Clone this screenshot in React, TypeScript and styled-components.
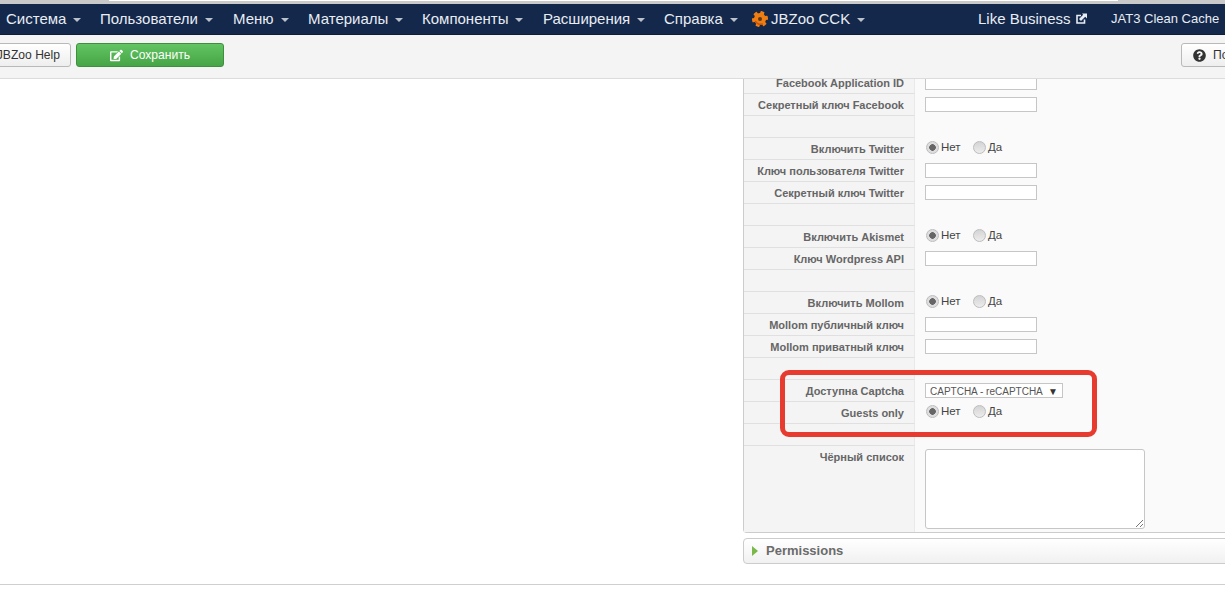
import React from 'react';
import styled, { createGlobalStyle } from 'styled-components';
import { FaEdit, FaQuestionCircle } from 'react-icons/fa';

const GlobalStyle = createGlobalStyle`
  html, body {
    margin: 0;
    padding: 0;
    height: 605px;
    overflow: hidden;
    background: #fff;
    font-family: "Liberation Sans", Arial, sans-serif;
  }
`;

const Page = styled.div`
  width: 1225px;
  height: 605px;
  overflow: hidden;
  display: flex;
  flex-direction: column;
`;

const TopStrip = styled.div`
  height: 4px;
  background: #c9c9c9;
  padding-left: 109px;
  padding-right: 107px;
  flex: none;
`;

const StripHighlight = styled.div`
  height: 1px;
  background: #fff;
`;

const Navbar = styled.nav`
  height: 31px;
  flex: none;
  background: #14284b;
  border-bottom: 1px solid #0f1e38;
  box-sizing: border-box;
  display: flex;
  align-items: center;
  padding: 0 0 1px 6px;
  color: #e8edf4;
  font-size: 15px;
  white-space: nowrap;
`;

const NavItem = styled.div<{ $w: number }>`
  width: ${p => p.$w}px;
  flex: none;
  display: flex;
  align-items: center;
`;

const CacheItem = styled(NavItem)`
  font-size: 13px;
`;

const Caret = styled.span`
  width: 0;
  height: 0;
  margin: 3px 0 0 7px;
  border-top: 4px solid #bcc2cc;
  border-left: 4px solid transparent;
  border-right: 4px solid transparent;
`;

const NavIcon = styled.svg`
  width: 16px;
  height: 16px;
  margin: 0 3px 0 1px;
  flex: none;
`;

const OutIcon = styled.svg`
  width: 11px;
  height: 11px;
  margin-left: 5px;
  flex: none;
`;

const Toolbar = styled.div`
  height: 44px;
  flex: none;
  box-sizing: border-box;
  background: #f4f4f4;
  border-bottom: 1px solid #dcdcdc;
  display: flex;
  align-items: flex-start;
  padding-top: 8px;
  overflow: hidden;
`;

const ToolButton = styled.div<{ $w: number; $ml: number }>`
  flex: none;
  width: ${p => p.$w}px;
  margin-left: ${p => p.$ml}px;
  height: 24px;
  box-sizing: border-box;
  border-radius: 3px;
  border: 1px solid #b9b9b9;
  background: linear-gradient(#ffffff, #eeeeee);
  color: #333;
  font-size: 12.1px;
  display: flex;
  align-items: center;
  gap: 7px;
  white-space: nowrap;
`;

const HelpButton = styled(ToolButton)`
  justify-content: flex-end;
  padding-right: 10px;
`;

const SaveButton = styled(ToolButton)`
  justify-content: center;
  border-color: #3f8f3f;
  background: linear-gradient(#62c462, #46a546);
  color: #fff;
`;

const OptionsButton = styled(ToolButton)`
  padding-left: 11px;
`;

const Content = styled.div`
  height: 506px;
  flex: none;
  box-sizing: border-box;
  padding-left: 743px;
  border-bottom: 1px solid #cfcfcf;
  overflow: hidden;
`;

const Column = styled.div`
  width: 540px;
`;

const Panel = styled.div`
  position: relative;
  border: 1px solid #cccccc;
  border-top: none;
  border-radius: 0 0 4px 4px;
  background: #fafafa;
`;

const Row = styled.div<{ $h?: number }>`
  display: flex;
  height: ${p => p.$h ?? 22}px;
`;

const Label = styled.div`
  flex: none;
  width: 171px;
  height: 100%;
  box-sizing: border-box;
  background: #f4f4f4;
  border-right: 1px solid #e9e9e9;
  border-bottom: 1px solid #e0e0e0;
  padding-right: 10px;
  text-align: right;
  color: #666;
  font-size: 11px;
  font-weight: bold;
  line-height: 22px;
  white-space: nowrap;
`;

const ClippedLabel = styled(Label)`
  line-height: 9px;
`;

const BlockLabel = styled(Label)`
  border-bottom: none;
`;

const Value = styled.div`
  padding-left: 10px;
  display: flex;
  align-items: flex-start;
`;

const TextInput = styled.div<{ $clipped?: boolean }>`
  width: 112px;
  height: ${p => (p.$clipped ? 11 : 15)}px;
  margin-top: ${p => (p.$clipped ? 0 : 3)}px;
  box-sizing: border-box;
  border: 1px solid #c6c6c6;
  ${p => (p.$clipped ? 'border-top: none;' : '')}
  background: #fff;
`;

const Radios = styled.div`
  display: flex;
  align-items: center;
  height: 16px;
  margin-top: 1px;
  font-size: 11.5px;
  color: #444;
`;

const Radio = styled.span<{ $on?: boolean }>`
  width: 13px;
  height: 13px;
  box-sizing: border-box;
  border-radius: 50%;
  border: 1px solid #bdbdbd;
  background: ${p => (p.$on ? 'radial-gradient(circle, #666 0 3px, #dedede 3.6px)' : 'linear-gradient(#d4d4d4, #ececec)')};
  margin: 0 2px 0 1px;
`;

const RadioText = styled.span`
  width: 31px;
  &:last-child {
    width: auto;
  }
`;

const SelectBox = styled.div`
  width: 138px;
  height: 15px;
  margin-top: 3px;
  box-sizing: border-box;
  border: 1px solid #c6c6c6;
  background: #fff;
  color: #555;
  font-size: 10px;
  display: flex;
  align-items: center;
  justify-content: space-between;
  padding: 1px 4px 0;
  white-space: nowrap;
`;

const SelectArrow = styled.span`
  font-size: 10px;
  color: #333;
`;

const TextArea = styled.div`
  position: relative;
  width: 220px;
  height: 80px;
  margin-top: 3px;
  box-sizing: border-box;
  border: 1px solid #c6c6c6;
  border-radius: 3px;
  background: #fff;
`;

const ResizeGrip = styled.svg`
  position: absolute;
  right: 0;
  bottom: 0;
  width: 9px;
  height: 9px;
`;

const Highlight = styled.div`
  position: absolute;
  left: 36px;
  top: 291px;
  width: 317px;
  height: 67px;
  box-sizing: border-box;
  border: 5px solid #e63b2e;
  border-radius: 9px;
`;

const Accordion = styled.div`
  margin-top: 5px;
  height: 26px;
  box-sizing: border-box;
  border: 1px solid #cccccc;
  border-radius: 4px;
  background: linear-gradient(#ffffff, #f1f1f1);
  display: flex;
  align-items: center;
  padding: 0 0 2px 8px;
  color: #6b6b6b;
  font-size: 13px;
  font-weight: bold;
`;

const Triangle = styled.svg`
  width: 6px;
  height: 10px;
  margin: 2px 8px 0 0;
`;

const navItems: [string, number][] = [
  ['Система', 94],
  ['Пользователи', 133],
  ['Меню', 75],
  ['Материалы', 114],
  ['Компоненты', 121],
  ['Расширения', 121],
  ['Справка', 87],
];

const YesNo = () => (
  <Radios>
    <Radio $on />
    <RadioText>Нет</RadioText>
    <Radio />
    <RadioText>Да</RadioText>
  </Radios>
);

const Gear = () => (
  <NavIcon viewBox="0 0 24 24">
    <g fill="#ef7d12" transform="rotate(20 12 12)">
      <circle cx="12" cy="12" r="9" />
      {[0, 60, 120, 180, 240, 300].map(a => (
        <rect key={a} x="9" y="0" width="6" height="5" rx="1" transform={`rotate(${a} 12 12)`} />
      ))}
    </g>
    <circle cx="12" cy="12" r="3" fill="#5a3a1c" />
    <path d="M5 15a8 8 0 0 0 11 4" stroke="#c9520a" strokeWidth="2.4" fill="none" />
  </NavIcon>
);

export default function App() {
  return (
    <Page>
      <GlobalStyle />
      <TopStrip>
        <StripHighlight />
      </TopStrip>
      <Navbar>
        {navItems.map(([text, w]) => (
          <NavItem key={text} $w={w}>
            {text}
            <Caret />
          </NavItem>
        ))}
        <NavItem $w={227}>
          <Gear />
          JBZoo CCK
          <Caret />
        </NavItem>
        <NavItem $w={133}>
          Like Business
          <OutIcon viewBox="0 0 11 11">
            <path d="M8.5 6.5V10H1V2.5h4" stroke="#e8edf4" strokeWidth="1.6" fill="none" />
            <path d="M3.5 7.5 8 3M6 .5h5v5L9.2 3.8 5 8 3 6l4.2-4.2Z" fill="#e8edf4" />
          </OutIcon>
        </NavItem>
        <CacheItem $w={114}>JAT3 Clean Cache</CacheItem>
      </Navbar>
      <Toolbar>
        <HelpButton $w={74} $ml={-3}>JBZoo Help</HelpButton>
        <SaveButton $w={148} $ml={5}>
          <FaEdit size={13} />
          Сохранить
        </SaveButton>
        <OptionsButton $w={100} $ml={957}>
          <FaQuestionCircle size={13} />
          Помощь
        </OptionsButton>
      </Toolbar>
      <Content>
        <Column>
          <Panel>
            <Row $h={15}>
              <ClippedLabel>Facebook Application ID</ClippedLabel>
              <Value><TextInput $clipped /></Value>
            </Row>
            <Row>
              <Label>Секретный ключ Facebook</Label>
              <Value><TextInput /></Value>
            </Row>
            <Row><Label /></Row>
            <Row>
              <Label>Включить Twitter</Label>
              <Value><YesNo /></Value>
            </Row>
            <Row>
              <Label>Ключ пользователя Twitter</Label>
              <Value><TextInput /></Value>
            </Row>
            <Row>
              <Label>Секретный ключ Twitter</Label>
              <Value><TextInput /></Value>
            </Row>
            <Row><Label /></Row>
            <Row>
              <Label>Включить Akismet</Label>
              <Value><YesNo /></Value>
            </Row>
            <Row>
              <Label>Ключ Wordpress API</Label>
              <Value><TextInput /></Value>
            </Row>
            <Row><Label /></Row>
            <Row>
              <Label>Включить Mollom</Label>
              <Value><YesNo /></Value>
            </Row>
            <Row>
              <Label>Mollom публичный ключ</Label>
              <Value><TextInput /></Value>
            </Row>
            <Row>
              <Label>Mollom приватный ключ</Label>
              <Value><TextInput /></Value>
            </Row>
            <Row><Label /></Row>
            <Row>
              <Label>Доступна Captcha</Label>
              <Value>
                <SelectBox>
                  CAPTCHA - reCAPTCHA
                  <SelectArrow>▼</SelectArrow>
                </SelectBox>
              </Value>
            </Row>
            <Row>
              <Label>Guests only</Label>
              <Value><YesNo /></Value>
            </Row>
            <Row><Label /></Row>
            <Row $h={86}>
              <BlockLabel>Чёрный список</BlockLabel>
              <Value>
                <TextArea>
                  <ResizeGrip viewBox="0 0 9 9">
                    <path d="M1 8 8 1M5 8 8 5" stroke="#777" strokeWidth="1" />
                  </ResizeGrip>
                </TextArea>
              </Value>
            </Row>
            <Highlight />
          </Panel>
          <Accordion>
            <Triangle viewBox="0 0 6 10">
              <path d="M0 0 6 5 0 10Z" fill="#7ab84a" />
            </Triangle>
            Permissions
          </Accordion>
        </Column>
      </Content>
    </Page>
  );
}
